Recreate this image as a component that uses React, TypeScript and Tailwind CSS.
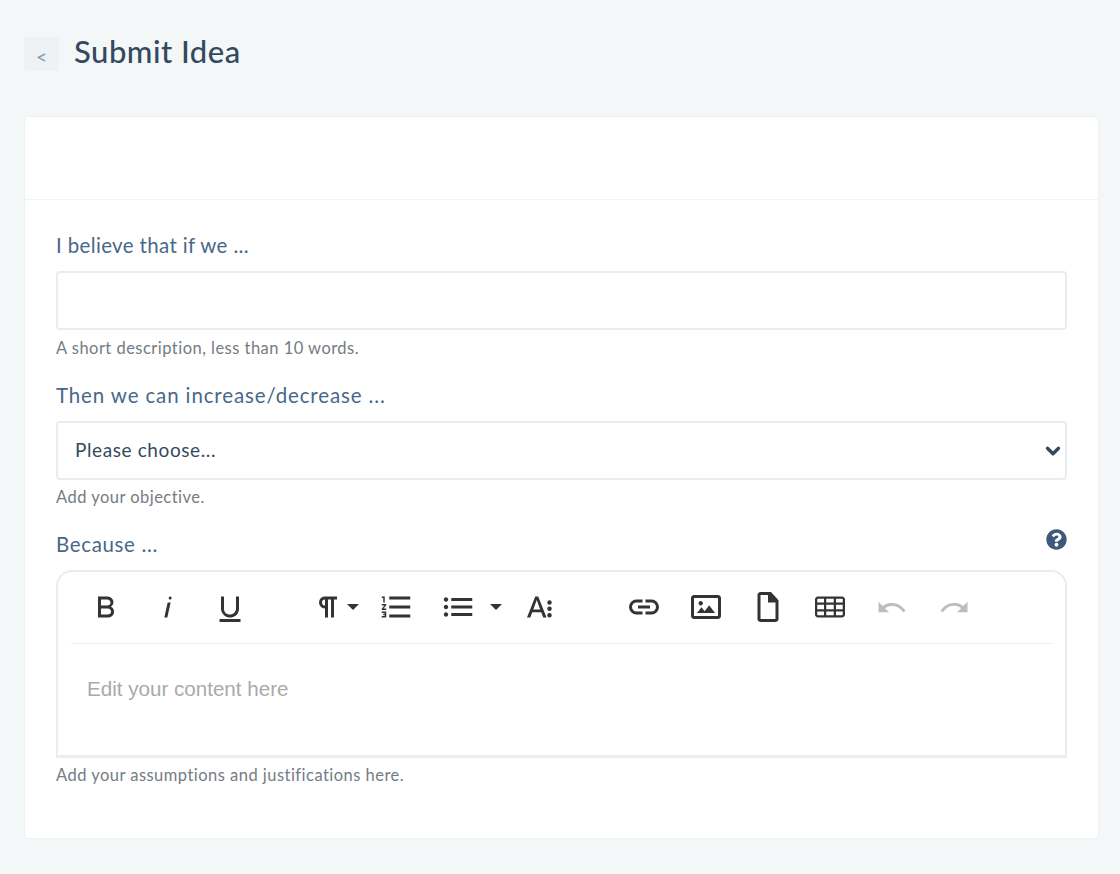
import { ChevronDown } from "lucide-react";
import { FaQuestionCircle } from "react-icons/fa";

const ICON = "#333333";

function Icon({ d, color = ICON }: { d: string; color?: string }) {
  return (
    <svg viewBox="0 0 24 24" className="h-9 w-9 shrink-0" fill={color}>
      <path d={d} />
    </svg>
  );
}

function Caret() {
  return (
    <svg viewBox="0 0 12 6" className="h-[6px] w-3 shrink-0" fill={ICON}>
      <path d="M0 0h12L6 6z" />
    </svg>
  );
}

const paths = {
  bold: "M15.25,11.8h0A3.68,3.68,0,0,0,17,9a3.93,3.93,0,0,0-3.86-4H6.65V19h7a3.74,3.74,0,0,0,3.7-3.78V15.1A3.64,3.64,0,0,0,15.25,11.8ZM8.65,7h4.2a2.09,2.09,0,0,1,2,1.3,2.09,2.09,0,0,1-1.37,2.61,2.23,2.23,0,0,1-.63.09H8.65Zm4.6,10H8.65V13h4.6a2.09,2.09,0,0,1,2,1.3,2.09,2.09,0,0,1-1.37,2.61A2.23,2.23,0,0,1,13.25,17Z",
  italic: "M11.76,9h2l-2.2,10h-2Zm1.68-4a1,1,0,1,0,1,1,1,1,0,0,0-1-1Z",
  underline: "M19,20v2H5V20Zm-3-6.785a4,4,0,0,1-5.74,3.4A3.75,3.75,0,0,1,8,13.085V5.005H6v8.21a6,6,0,0,0,8,5.44,5.851,5.851,0,0,0,4-5.65v-8H16Z",
  paragraph: "M10.15,5A4.11,4.11,0,0,0,6.08,8.18,4,4,0,0,0,10,13v6h2V7h2V19h2V7h2V5ZM10,11a2,2,0,0,1-2-1.87v-.25A2,2,0,0,1,10,7V11Z",
  ol: "M2.5,16h2v.5h-1v1h1V18h-2v1h3V15h-3Zm1-7h1V5h-2V6h1Zm-1,2H4.3L2.5,13.1V14h3V13H3.7l1.8-2.1V10h-3ZM7.5,5V7h14V5Zm0,14h14V17H7.5Zm0-6h14V11H7.5Z",
  ul: "M4,10.5c-0.8,0-1.5,0.7-1.5,1.5s0.7,1.5,1.5,1.5s1.5-0.7,1.5-1.5S4.8,10.5,4,10.5z M4,5.5C3.2,5.5,2.5,6.2,2.5,7S3.2,8.5,4,8.5S5.5,7.8,5.5,7S4.8,5.5,4,5.5z M4,15.5c-0.8,0-1.5,0.7-1.5,1.5s0.7,1.5,1.5,1.5s1.5-0.7,1.5-1.5S4.8,15.5,4,15.5z M7.5,6v2h14V6H7.5z M7.5,18h14v-2h-14V18z M7.5,13h14v-2h-14V13z",
  fontSize: "M9.5,5h2L17,19h-2.2l-1.3-3.5H7.5L6.2,19H4ZM8.2,13.6h4.6L10.5,7.4ZM19,7.5a1.5,1.5,0,1,1-1.5,1.5A1.5,1.5,0,0,1,19,7.5Zm0,4.2a1.5,1.5,0,1,1-1.5,1.5A1.5,1.5,0,0,1,19,11.7Zm0,4.3a1.5,1.5,0,1,1-1.5,1.5A1.5,1.5,0,0,1,19,16Z",
  link: "M11,17H7A5,5,0,0,1,7,7h4V9H7a3,3,0,0,0,0,6h4ZM17,7H13V9h4a3,3,0,0,1,0,6H13v2h4A5,5,0,0,0,17,7Zm-1,4H8v2h8Z",
  image: "M14.2,11l3.8,5H6l3-3.9l2.1,2.7L14,11H14.2z M8.5,11c0.8,0,1.5-0.7,1.5-1.5S9.3,8,8.5,8S7,8.7,7,9.5C7,10.3,7.7,11,8.5,11z M22,6v12c0,1.1-0.9,2-2,2H4c-1.1,0-2-0.9-2-2V6c0-1.1,0.9-2,2-2h16C21.1,4,22,4.9,22,6z M20,8.8V6H4v12h16V8.8z",
  file: "M7,2h7l5,5.5V20c0,1.1-0.9,2-2,2H7c-1.1,0-2-0.9-2-2V4C5,2.9,5.9,2,7,2z M7,4v16h10V9h-5V4H7z",
  table: "M20,5H4C2.9,5,2,5.9,2,7v2v1.5v3V15v2c0,1.1,0.9,2,2,2h16c1.1,0,2-0.9,2-2v-2v-1.5v-3V9V7C22,5.9,21.1,5,20,5z M9.5,13.5v-3h5v3H9.5z M14.5,15v2.5h-5V15H14.5z M9.5,9V6.5h5V9H9.5z M3.5,7c0-0.3,0.2-0.5,0.5-0.5h4V9H3.5V7z M3.5,10.5H8v3H3.5V10.5z M3.5,17V15H8v2.5H4C3.7,17.5,3.5,17.3,3.5,17z M20.5,17c0,0.3-0.2,0.5-0.5,0.5h-4V15h4.5V17z M20.5,13.5H16v-3h4.5V13.5z M16,9V6.5h4c0.3,0,0.5,0.2,0.5,0.5v2H16z",
  undo: "M10.4,9.4c-1.7,0.3-3.2,0.9-4.6,2L3,8.5v7h7l-2.7-2.7c3.7-2.6,8.8-1.8,11.5,1.9c0.2,0.3,0.4,0.5,0.5,0.8l1.8-0.9C18.9,10.8,14.7,8.7,10.4,9.4z",
  redo: "M13.6,9.4c1.7,0.3,3.2,0.9,4.6,2L21,8.5v7h-7l2.7-2.7C13,10.1,7.9,11,5.3,14.7c-0.2,0.3-0.4,0.5-0.5,0.8L3,14.6C5.1,10.8,9.3,8.7,13.6,9.4z",
};

function Btn({ d, color }: { d: string; color?: string }) {
  return (
    <div className="flex w-[62px] shrink-0 items-center justify-center">
      <Icon d={d} color={color} />
    </div>
  );
}

function Label({ children, className }: { children: React.ReactNode; className: string }) {
  return <label className={`block text-[20.5px] leading-[30px] text-[#48688a] ${className}`}>{children}</label>;
}

function Help({ children }: { children: React.ReactNode }) {
  return <p className="text-[16.5px] leading-6 tracking-[0.47px] text-[#747c84]">{children}</p>;
}

export default function App() {
  return (
    <div className="min-h-[874px] bg-[#f4f7f8] pl-6 pr-[21px] pt-[37px] font-['Lato','Noto_Sans',sans-serif]">
      {/* Page title */}
      <div className="flex items-start">
        <button className="flex h-[34px] w-[35px] items-center justify-center rounded bg-[#eef2f5] pt-[3px] text-[20px] text-[#7f9db5]">
          &lt;
        </button>
        <h1 className="ml-[15px] -mt-px text-[31px] font-medium leading-[30px] tracking-[0.5px] text-[#34495e]">Submit Idea</h1>
      </div>

      <div className="mt-[45px] h-[723px] rounded border border-[#eef1f4] bg-white">
        <div className="h-[83px] border-b border-[#f1f3f5]" />

        <div className="px-[31px] pt-[30px]">
          <Label className="tracking-[0.35px]">I believe that if we ...</Label>
          <input
            type="text"
            className="mt-[11px] block h-[59px] w-full rounded border-2 border-[#e9edf1] bg-white px-[18px] outline-none"
          />
          <div className="mt-[6px]">
            <Help>A short description, less than 10 words.</Help>
          </div>

          <div className="mt-[20px]">
            <Label className="tracking-[0.87px]">Then we can increase/decrease ...</Label>
          </div>
          <div className="relative mt-[11px]">
            <select className="block h-[59px] w-full appearance-none rounded border-2 border-[#e9edf1] bg-white px-[17px] text-[19px] tracking-[0.6px] text-[#34495e] outline-none">
              <option>Please choose...</option>
            </select>
            <ChevronDown
              className="pointer-events-none absolute right-[3px] top-[19px] h-[22px] w-[22px] text-[#34495e]"
              strokeWidth={3.6}
            />
          </div>
          <div className="mt-[5px]">
            <Help>Add your objective.</Help>
          </div>

          <div className="mt-[20px] flex items-start justify-between">
            <Label className="tracking-[0.65px]">Because ...</Label>
            <FaQuestionCircle className="h-[21px] w-[21px] text-[#3d5a7a]" />
          </div>

          {/* Rich text editor */}
          <div className="mt-[11px] h-[188px] rounded-t-[16px] border-2 border-b-[3px] border-[#e9edf1] bg-white">
            <div className="mx-[13px] flex h-[72px] items-center border-b border-[#efefef] pb-[2px] pl-[4px]">
              <Btn d={paths.bold} />
              <Btn d={paths.italic} />
              <Btn d={paths.underline} />
              <div className="ml-[36px] flex w-[68px] shrink-0 items-center pl-[13px]">
                <Icon d={paths.paragraph} />
                <div className="ml-[1px]">
                  <Caret />
                </div>
              </div>
              <Btn d={paths.ol} />
              <div className="flex w-[81px] shrink-0 items-center pl-[13px]">
                <Icon d={paths.ul} />
                <div className="ml-[14px]">
                  <Caret />
                </div>
              </div>
              <Btn d={paths.fontSize} />
              <div className="w-[43px] shrink-0" />
              <Btn d={paths.link} />
              <Btn d={paths.image} />
              <Btn d={paths.file} />
              <Btn d={paths.table} />
              <Btn d={paths.undo} color="#bdbdbd" />
              <Btn d={paths.redo} color="#bdbdbd" />
            </div>
            <div className="px-[29px] pt-[32px] font-['Liberation_Sans',Arial,sans-serif] text-[20.6px] leading-[26px] text-[#aaaaaa]">
              Edit your content here
            </div>
          </div>

          <div className="mt-[5px]">
            <Help>Add your assumptions and justifications here.</Help>
          </div>
        </div>
      </div>
    </div>
  );
}
